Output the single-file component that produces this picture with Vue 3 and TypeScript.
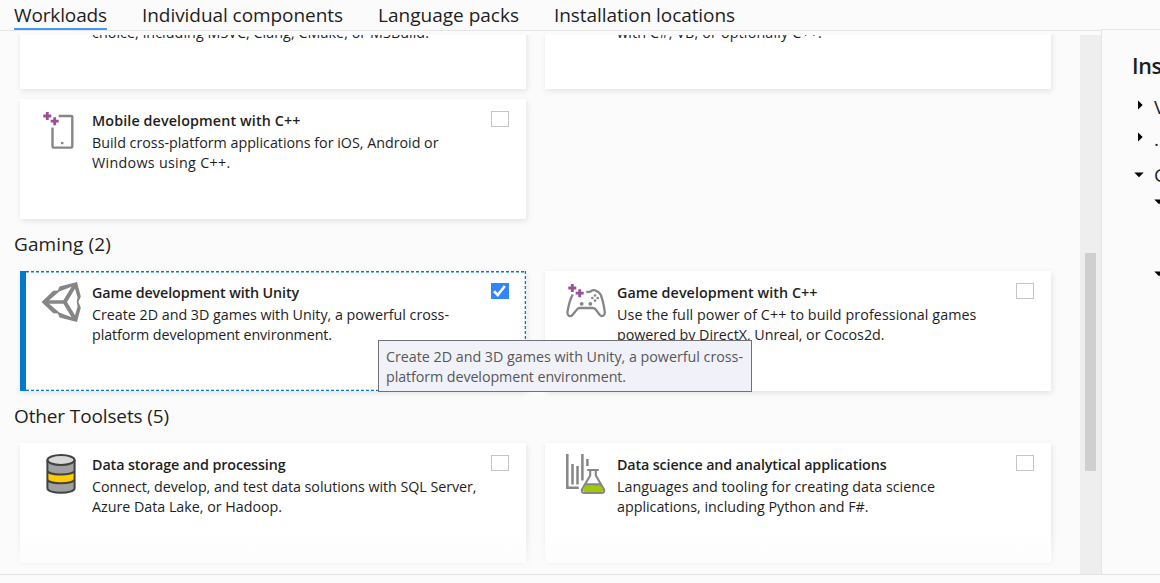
<script setup lang="ts">
import type { Directive } from 'vue'

interface Line { text: string; width: number }
interface Card {
  id: string
  icon: string
  title: Line
  lines: Line[]
  checked?: boolean
}
interface Group { heading?: Line; cards: Card[] }

// Spreads a line's letters so that it takes exactly the given width.
const vFit: Directive<HTMLElement, number> = {
  mounted(el, binding) {
    const count = (el.textContent ?? '').length
    const natural = el.getBoundingClientRect().width
    if (count > 0) el.style.letterSpacing = `${(binding.value - natural) / count}px`
  },
}

const tabs: (Line & { active?: boolean })[] = [
  { text: 'Workloads', width: 93, active: true },
  { text: 'Individual components', width: 201 },
  { text: 'Language packs', width: 141 },
  { text: 'Installation locations', width: 181 },
]

const groups: Group[] = [
  {
    cards: [
      {
        id: 'desktop-cpp', icon: '', title: { text: '', width: 0 },
        lines: [{ text: '', width: 0 }, { text: 'choice, including MSVC, Clang, CMake, or MSBuild.', width: 337 }],
      },
      {
        id: 'uwp', icon: '', title: { text: '', width: 0 },
        lines: [{ text: '', width: 0 }, { text: 'with C#, VB, or optionally C++.', width: 205 }],
      },
      {
        id: 'mobile', icon: 'mobile', title: { text: 'Mobile development with C++', width: 208.5 },
        lines: [
          { text: 'Build cross-platform applications for iOS, Android or', width: 346.5 },
          { text: 'Windows using C++.', width: 138.5 },
        ],
      },
    ],
  },
  {
    heading: { text: 'Gaming (2)', width: 97 },
    cards: [
      {
        id: 'unity', icon: 'unity', checked: true, title: { text: 'Game development with Unity', width: 207 },
        lines: [
          { text: 'Create 2D and 3D games with Unity, a powerful cross-', width: 357 },
          { text: 'platform development environment.', width: 240 },
        ],
      },
      {
        id: 'game-cpp', icon: 'pad', title: { text: 'Game development with C++', width: 200.5 },
        lines: [
          { text: 'Use the full power of C++ to build professional games', width: 359.5 },
          { text: 'powered by DirectX, Unreal, or Cocos2d.', width: 267.5 },
        ],
      },
    ],
  },
  {
    heading: { text: 'Other Toolsets (5)', width: 155 },
    cards: [
      {
        id: 'data', icon: 'db', title: { text: 'Data storage and processing', width: 193.5 },
        lines: [
          { text: 'Connect, develop, and test data solutions with SQL Server,', width: 384.5 },
          { text: 'Azure Data Lake, or Hadoop.', width: 190 },
        ],
      },
      {
        id: 'science', icon: 'lab', title: { text: 'Data science and analytical applications', width: 269.5 },
        lines: [
          { text: 'Languages and tooling for creating data science', width: 318 },
          { text: 'applications, including Python and F#.', width: 251.5 },
        ],
      },
    ],
  },
]

const tip: Line[] = [
  { text: 'Create 2D and 3D games with Unity, a powerful cross-', width: 357 },
  { text: 'platform development environment.', width: 240 },
]
</script>

<template>
  <div class="window">
    <nav class="tabs">
      <a v-for="t in tabs" :key="t.text" class="tab" :class="{ active: t.active }">
        <span v-fit="t.width" class="fit">{{ t.text }}</span>
      </a>
    </nav>

    <div class="main">
      <div class="viewport">
        <div class="content">
          <section v-for="(g, gi) in groups" :key="gi">
            <h2 v-if="g.heading"><span v-fit="g.heading.width" class="fit">{{ g.heading.text }}</span></h2>
            <div class="grid">
              <article v-for="c in g.cards" :key="c.id" class="card" :class="{ selected: c.checked }">
                <svg v-if="c.checked" class="frame" width="506" height="120" fill="none" stroke="#007acc">
                  <path d="M6 .8H506M6 119.4H506M505.4 0V120" stroke-width="1.4" stroke-dasharray="3 2" />
                  <path d="M3 0V120" stroke-width="6" />
                </svg>
                <svg class="icon" width="40" height="40" viewBox="0 0 40 40" fill="none">
                  <g v-if="c.icon === 'mobile' || c.icon === 'pad'" stroke="#9b4f96" stroke-width="2.8">
                    <path d="M6.3 2V10M2.3 6H10.3M13.7 7.2V15.2M9.7 11.2H17.7" />
                  </g>
                  <template v-if="c.icon === 'mobile'">
                    <path d="M17.7 6H30.3Q31.3 6 31.3 7V36.5Q31.3 37.6 30.3 37.6H12.5Q11.5 37.6 11.5 36.5V17.5" stroke="#868686" stroke-width="2.4" />
                    <rect x="20" y="32" width="2.4" height="2.2" fill="#868686" />
                  </template>
                  <path
                    v-if="c.icon === 'unity'" fill="#868686" fill-rule="evenodd"
                    d="M.5 20L12.3 8.8L16.8 8.6L18.6 4.6L36 0L39.8 14.5L37.4 20L39.8 25.5L36 40L18.6 35.4L16.8 31.4L12.3 31.2ZM8.2 18.2H22.4L30.6 4.8L18.3 9.6ZM8.2 21.8L18.3 30.4L30.6 35.2L22.4 21.8ZM26 20L34 33.2L36.6 24.6L35.7 20L36.6 15.4L34 6.8Z"
                  />
                  <template v-if="c.icon === 'pad'">
                    <path d="M6.7 12.5C4.3 17 2.6 23 1.5 29.5C.9 34.4 4.6 35.2 6.7 32.7L10.8 27.6Q12 26 14 26H26.7Q28.6 26 29.8 27.6L33.6 32.7C35.7 35.2 39.3 34.2 38.7 29.5C37.8 23 36.5 17 34.6 12.5C32.2 8.6 27.6 7 24.8 9.3Q24 10 20.3 10" stroke="#868686" stroke-width="2.3" />
                    <g fill="#868686">
                      <circle cx="15.7" cy="21.8" r="1.9" /><circle cx="24.3" cy="21.8" r="1.9" />
                      <circle cx="29" cy="13.5" r="1.3" /><circle cx="26.3" cy="16" r="1.3" />
                      <circle cx="31.7" cy="16" r="1.3" /><circle cx="29" cy="18.6" r="1.3" />
                    </g>
                  </template>
                  <template v-if="c.icon === 'db'">
                    <path d="M6.4 6V34C6.4 40.5 33.6 40.5 33.6 34V6Z" fill="#a0a0a0" />
                    <path d="M6.4 16.8C6.4 22 33.6 22 33.6 16.8V25.6C33.6 30.6 6.4 30.6 6.4 25.6Z" fill="#fc0" />
                    <ellipse cx="20" cy="6" rx="13.6" ry="5" fill="#d8d8d8" />
                    <g stroke="#424242" stroke-width="2">
                      <ellipse cx="20" cy="6" rx="13.6" ry="5" />
                      <path d="M6.4 6V34C6.4 40.4 33.6 40.4 33.6 34V6M6.4 16.4C6.4 21.8 33.6 21.8 33.6 16.4M6.4 25.2C6.4 30.6 33.6 30.6 33.6 25.2" />
                    </g>
                  </template>
                  <template v-if="c.icon === 'lab'">
                    <path d="M1.3 0V33.7H12.7M6.5 10V30.5M11.5 12V30.5M16.4 0V26.5M21.4 5V12" stroke="#868686" stroke-width="2.5" />
                    <path d="M19.5 30.8H34.8L37.4 36Q37.4 38 35 38H19Q16.8 38 17 36Z" fill="#9fc900" />
                    <path d="M21.3 16H32.7M24.2 16V21.5L16.4 34.8C15 37.6 16.2 39 18.6 39H35.4C37.8 39 39 37.6 37.6 34.8L29.8 21.5V16M19.5 30.3H34.5" stroke="#868686" stroke-width="2.1" />
                  </template>
                </svg>
                <div class="text">
                  <h3><span v-fit="c.title.width" class="fit">{{ c.title.text }}</span></h3>
                  <p v-for="(l, i) in c.lines" :key="i"><span v-fit="l.width" class="fit">{{ l.text }}</span></p>
                </div>
                <span class="check" :class="{ on: c.checked }">
                  <svg v-if="c.checked" width="18" height="16" fill="none" stroke="#fff" stroke-width="2.6">
                    <path d="M3 8.3L6.8 12L13.8 3" />
                  </svg>
                </span>
                <div v-if="c.id === 'unity'" class="tooltip">
                  <p v-for="(l, i) in tip" :key="i"><span v-fit="l.width" class="fit">{{ l.text }}</span></p>
                </div>
              </article>
            </div>
          </section>
        </div>
        <div class="fade"></div>
      </div>
      <div class="track"><div class="thumb"></div></div>
    </div>

    <aside class="details">
      <h1>Ins</h1>
      <div class="node"><svg width="10" height="10"><path d="M4 .5L8.7 5L4 9.5Z" /></svg><span>V</span></div>
      <div class="node second"><svg width="10" height="10"><path d="M4 .5L8.7 5L4 9.5Z" /></svg><span>.</span></div>
      <div class="node third"><svg width="10" height="10"><path d="M.3 2.5H9.7L5 7.2Z" /></svg><span>G</span></div>
      <div class="node leaf"><svg width="10" height="10"><path d="M.3 2.5H9.7L5 7.2Z" /></svg></div>
      <div class="node leaf last"><svg width="10" height="10"><path d="M.3 2.5H9.7L5 7.2Z" /></svg></div>
    </aside>
    <footer class="foot"></footer>
  </div>
</template>

<style>
body { overflow: hidden; background: #fbfbfb; }
</style>

<style scoped>
* { box-sizing: border-box; }
h1, h2, h3, p { margin: 0; font-weight: 400; }
svg { display: block; flex: none; }
.window {
  width: 1160px; height: 583px; overflow: hidden; background: #fbfbfb; color: #1e1e1e;
  display: grid; grid-template-columns: 1101px 59px; grid-template-rows: 31px 543px 9px;
  font-family: "Open Sans", "Noto Sans", sans-serif;
}
.fit { display: inline-block; white-space: pre; }
.tabs { grid-column: 1; grid-row: 1; display: flex; gap: 35px; padding-left: 14px; border-bottom: 1px solid #e5e5e5; }
.tab { height: 30px; font-size: 19px; line-height: 30px; white-space: nowrap; }
.tab.active { border-bottom: 2px solid #4499fc; }
.main { grid-column: 1; grid-row: 2; display: flex; padding-top: 4px; min-height: 0; }
.viewport { position: relative; width: 1080px; height: 539px; overflow: hidden; }
.content { margin-top: -66px; }
h2 { height: 52px; padding-left: 14px; font-size: 19px; line-height: 50px; }
.grid { display: grid; grid-template-columns: 506px 506px; column-gap: 19px; row-gap: 10px; padding-left: 20px; }
.card { position: relative; height: 120px; padding: 11px 17px 0 21px; display: flex; background: #fff; box-shadow: 1px 2px 6px rgba(0, 0, 0, .1); }
.frame { position: absolute; left: 0; top: 0; }
.text { flex: 1; padding: 1px 0 0 11px; font-size: 14.3px; line-height: 20px; }
.text h3 { height: 22px; font-size: 14.3px; font-weight: 600; line-height: 20px; }
.text p { height: 20px; white-space: nowrap; }
.check { flex: none; width: 18px; height: 16px; margin-top: 1px; border: 1px solid #c4c4c4; background: #fff; }
.check.on { border: 0; background: #3385ff; }
.selected { z-index: 2; }
.tooltip {
  position: absolute; left: 358px; top: 69px; width: 374px; height: 52px; padding: 6px 7px;
  border: 1px solid #717175; background: #f1f2f9; color: #575757; font-size: 14.3px; line-height: 20px;
}
.tooltip p { height: 20px; }
.fade { position: absolute; left: 0; right: 0; bottom: 0; height: 40px; z-index: 3; background: linear-gradient(rgba(251, 251, 251, 0), #fbfbfb); }
.track { width: 21px; height: 539px; background: #eee; padding: 218px 0 0 5px; }
.thumb { width: 11px; height: 218px; background: #cfcfcf; }
.details { grid-column: 2; grid-row: 1 / 3; margin-top: 29px; border-top: 1px solid #e5e5e5; border-left: 1px solid #e5e5e5; overflow: hidden; padding: 22px 0 0 30px; background: #fbfbfb; }
h1 { font-size: 21.5px; font-weight: 600; line-height: 28px; height: 28px; letter-spacing: -.4px; white-space: nowrap; }
.node { display: flex; align-items: center; gap: 10px; height: 20px; margin: 15px 0 0 2px; font-size: 19px; line-height: 20px; white-space: nowrap; }
.node span { padding-top: 3px; }
.second { margin-top: 12px; }
.third { margin-top: 18px; }
.third span { padding-top: 0; }
.leaf { margin: 7px 0 0 22px; }
.last { margin-top: 52px; }
.foot { grid-column: 1 / 3; grid-row: 3; border-top: 1px solid #e2e2e2; }
</style>
